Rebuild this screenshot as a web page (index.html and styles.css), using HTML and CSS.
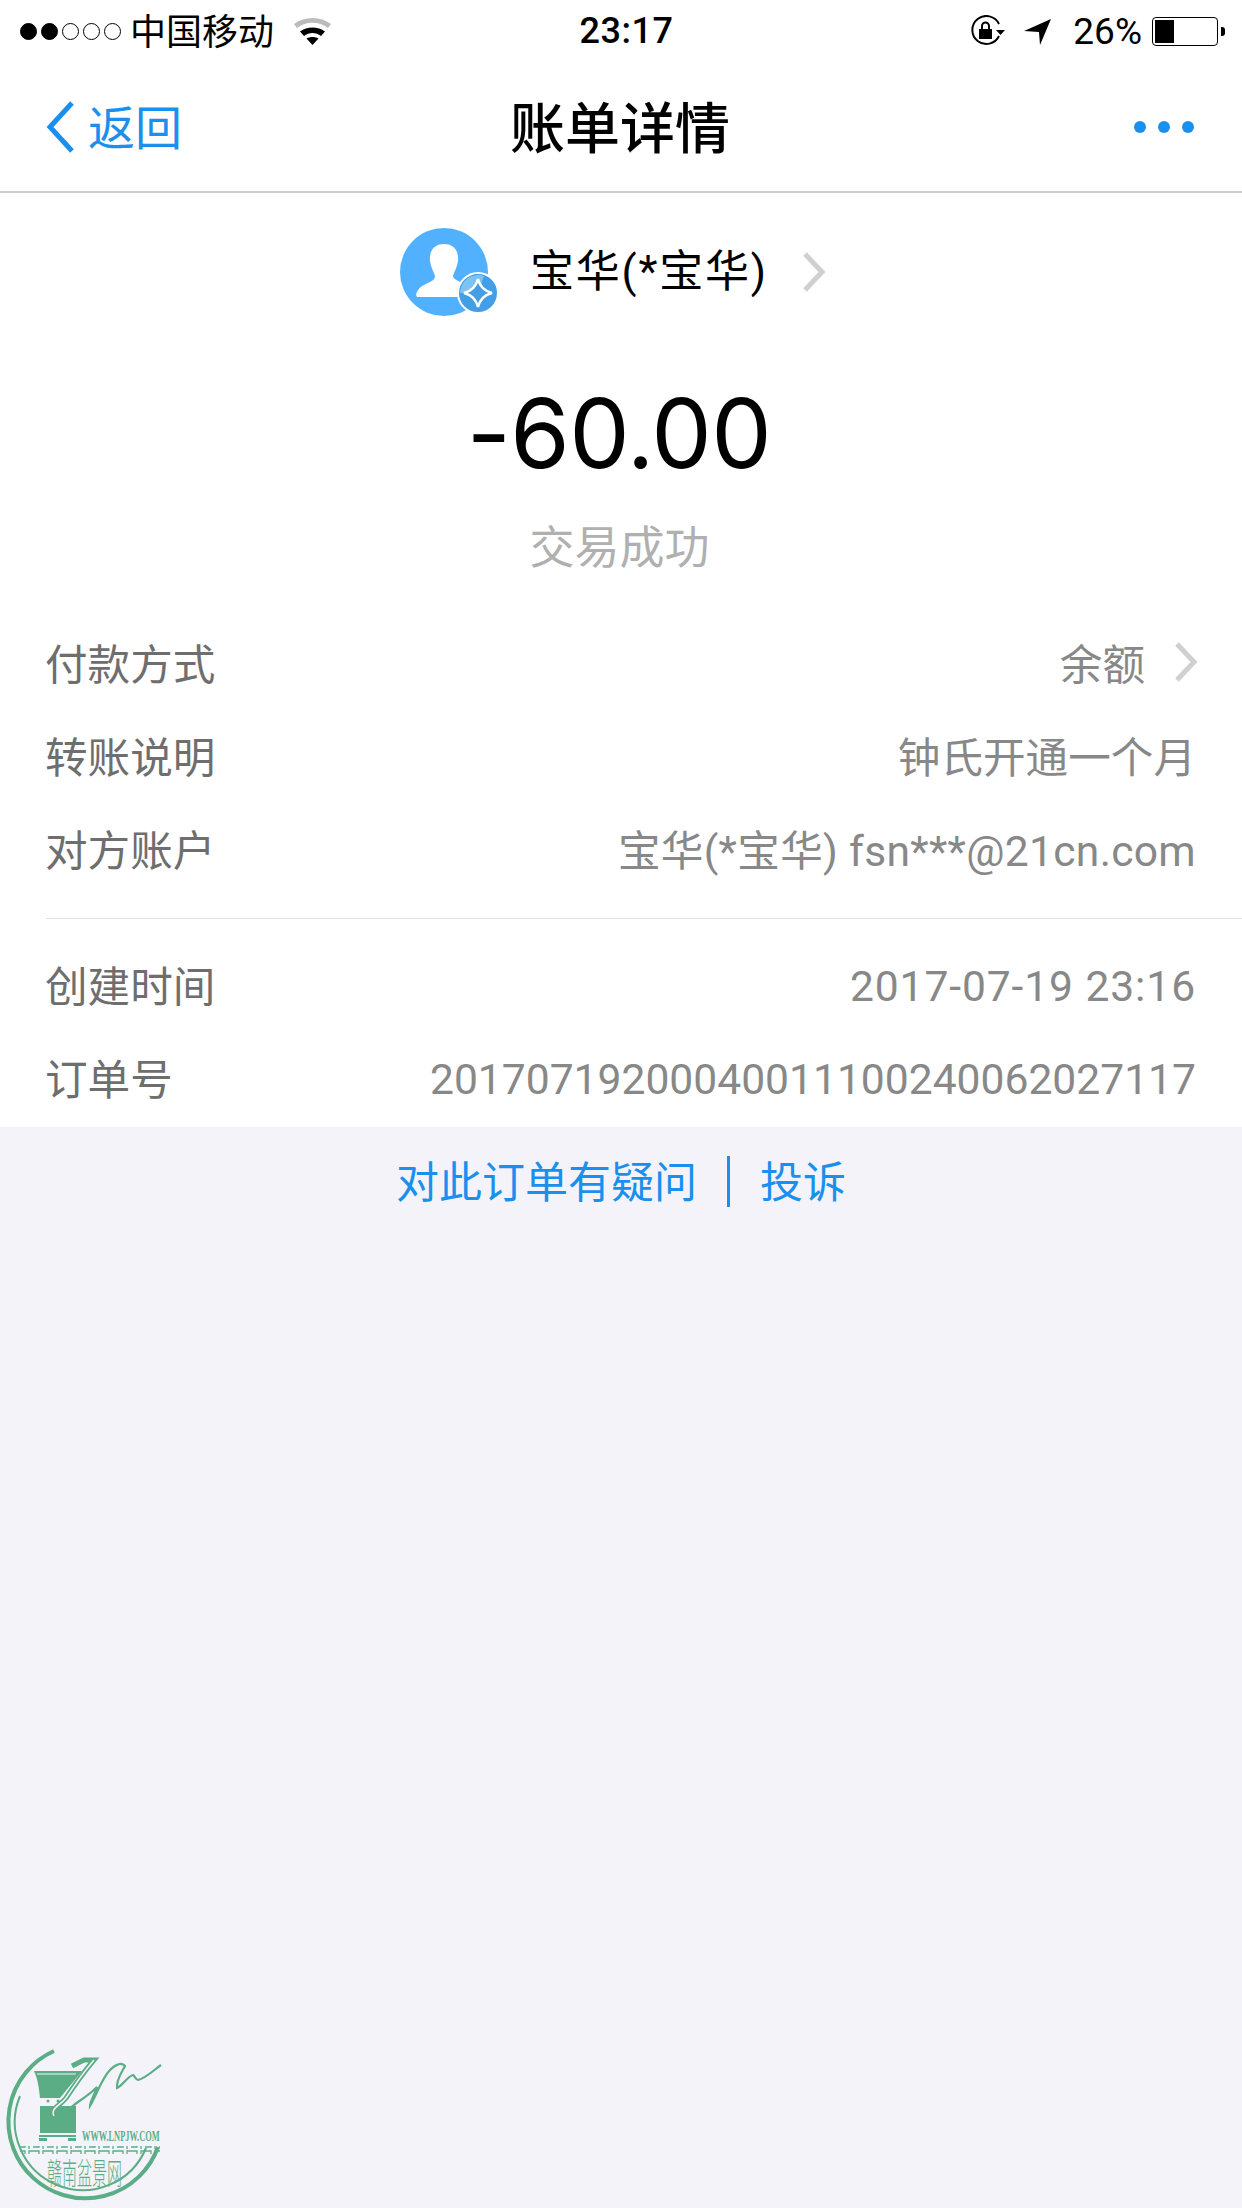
FILE: index.html
```html
<!DOCTYPE html>
<html lang="zh-CN">
<head>
  <meta charset="UTF-8">
  <title>账单详情</title>
  <link rel="stylesheet" href="styles.css">
</head>
<body>
  <div class="status-bar">
    <div class="status-left">
      <span class="signal"><i class="on"></i><i class="on"></i><i></i><i></i><i></i></span>
      <span class="carrier">中国移动</span>
      <svg class="wifi" width="37" height="27" viewBox="0 0 37 27">
        <path d="M0 6 C10 -2 27 -2 37 6 L34 10 C25 3 12 3 3 10 Z" fill="#bbb"/>
        <path d="M6 13.500 C13 8 24 8 31 13.500 L27 18 C22 14 15 14 10 18 Z" fill="#000"/>
        <path d="M12.500 20.500 C16 18.500 21 18.500 24.500 20.500 L18.500 27 Z" fill="#000"/>
      </svg>
    </div>
    <div class="status-time">23:17</div>
    <div class="status-right">
      <svg class="lock" width="34" height="32" viewBox="0 0 34 32">
        <path d="M28 21 A14 14 0 1 1 28 9" fill="none" stroke="#000" stroke-width="2"/>
        <path d="M25 15 H34 L29.500 20 Z" fill="#000"/>
        <rect x="8" y="14" width="13" height="10" fill="#000"/>
        <path d="M11 14 V11 A3.500 3.500 0 0 1 18 11 V14" fill="none" stroke="#000" stroke-width="2"/>
      </svg>
      <svg class="arrow" width="28" height="27" viewBox="0 0 28 27">
        <path d="M0 13 L27 1 L16 27 L15 14 Z" fill="#000"/>
      </svg>
      <span class="battery-text">26%</span>
      <span class="battery"><span class="battery-fill"></span></span>
      <span class="battery-tip"></span>
    </div>
  </div>

  <header class="nav">
    <a class="nav-back">
      <svg width="28" height="52" viewBox="0 0 28 52">
        <path d="M26 2 L4 26 L26 50" fill="none" stroke="#1a8fee" stroke-width="5"/>
      </svg>
      <span>返回</span>
    </a>
    <h1 class="nav-title">账单详情</h1>
    <span class="nav-more"><i></i><i></i><i></i></span>
  </header>

  <main class="bill">
    <div class="payee">
      <span class="avatar">
        <svg width="88" height="88" viewBox="0 0 88 88">
          <circle cx="44" cy="44" r="44" fill="#52b1ff"/>
          <path d="M44 16 C54 16 59 23 58 33 C57 40 54 44 53 48 C53 52 62 54 67 57 C72 60 74 64 74 69 H18 C14 69 17 60 24 57 C29 54 35 53 35 48 C34 44 31 40 30 33 C29 23 34 16 44 16 Z" fill="#fff"/>
        </svg>
        <svg class="avatar-badge" width="42" height="42" viewBox="0 0 42 42">
          <circle cx="21" cy="21" r="20" fill="#439ee6" stroke="#fff" stroke-width="2"/>
          <path d="M3 21 A18 18 0 0 1 27 4 L21 21 Z" fill="#7cc2f5"/>
          <path d="M21 7 C23 15 27 19 35 21 C27 23 23 27 21 35 C19 27 15 23 7 21 C15 19 19 15 21 7 Z" fill="#439ee6" stroke="#fff" stroke-width="2.500"/>
        </svg>
      </span>
      <span class="payee-name">宝华(*宝华)</span>
      <svg class="chevron" width="24" height="40" viewBox="0 0 24 40">
        <path d="M3 2 L20 20 L3 38" fill="none" stroke="#d0d0d0" stroke-width="5"/>
      </svg>
    </div>
    <div class="amount">-60.00</div>
    <div class="trade-state">交易成功</div>

    <div class="rows">
      <div class="row">
        <span class="row-label">付款方式</span>
        <span class="row-value">余额
          <svg class="chevron" width="24" height="40" viewBox="0 0 24 40">
            <path d="M3 2 L20 20 L3 38" fill="none" stroke="#d0d0d0" stroke-width="5"/>
          </svg>
        </span>
      </div>
      <div class="row">
        <span class="row-label">转账说明</span>
        <span class="row-value">钟氏开通一个月</span>
      </div>
      <div class="row">
        <span class="row-label">对方账户</span>
        <span class="row-value row-account">宝华(*宝华) fsn***@21cn.com</span>
      </div>
    </div>
    <div class="rows rows-second">
      <div class="row">
        <span class="row-label">创建时间</span>
        <span class="row-num row-date">2017-07-19 23:16</span>
      </div>
      <div class="row">
        <span class="row-label">订单号</span>
        <span class="row-num">20170719200040011100240062027117</span>
      </div>
    </div>
  </main>

  <div class="links">
    <a class="link-text">对此订单有疑问</a>
    <span class="link-bar"></span>
    <a class="link-text">投诉</a>
  </div>

  <svg class="watermark" width="200" height="178" viewBox="0 0 200 178">
    <defs>
      <pattern id="meander" width="14" height="8" patternUnits="userSpaceOnUse">
        <path d="M1 7 V1 H11 V5 H5" fill="none" stroke="#5bad85" stroke-width="1.300"/>
      </pattern>
    </defs>
    <!-- ring -->
    <path d="M54 21 A77 77 0 1 0 158 117" fill="none" stroke="#5bad85" stroke-width="4"/>
    <path d="M20 66 A68 68 0 0 0 146 118" fill="none" stroke="#5bad85" stroke-width="2"/>
    <!-- pot -->
    <path d="M34 41 H82 L60 68 H40 C39 58 38 50 34 41 Z" fill="#5bad85"/>
    <path d="M37 44 H76" fill="none" stroke="#f3f3f9" stroke-width="1"/>
    <rect x="40" y="76" width="36" height="27" fill="#5bad85"/>
    <rect x="39" y="105" width="37" height="2" fill="#5bad85"/>
    <rect x="39" y="108" width="8" height="3" fill="#5bad85"/>
    <rect x="68" y="108" width="8" height="3" fill="#5bad85"/>
    <circle cx="48" cy="71" r="1.500" fill="#5bad85"/>
    <circle cx="58" cy="71" r="1.500" fill="#5bad85"/>
    <!-- tree brush strokes -->
    <path d="M54 86 C50 78 60 76 66 68 C74 56 82 44 94 30 L84 30 L72 36" fill="none" stroke="#5bad85" stroke-width="5"/>
    <path d="M54 86 C50 78 60 76 66 68 C74 56 82 44 94 30" fill="none" stroke="#f3f3f9" stroke-width="1.500"/>
    <path d="M52 88 C62 86 70 78 78 72 C84 68 92 62 97 57 C94 66 90 72 90 76 C96 66 102 48 110 40 C116 34 122 32 125 36 C122 42 116 50 117 58 C122 56 128 46 133 45 C135 46 136 50 138 50 C146 48 154 40 161 35" fill="none" stroke="#5bad85" stroke-width="2.200"/>
    <g transform="translate(82 111) scale(0.56 1)">
      <text class="watermark-url">WWW.LNPJW.COM</text>
    </g>
    <rect x="20" y="116" width="140" height="8" fill="url(#meander)"/>
    <g transform="translate(47 154) scale(0.5 1)">
      <text class="watermark-name">赣南盆景网</text>
    </g>
  </svg>
</body>
</html>
```

FILE: styles.css
```css
* {
  box-sizing: border-box;
}
html, body {
  margin: 0;
  padding: 0;
}
body {
  width: 1242px;
  height: 2208px;
  position: relative;
  overflow: hidden;
  background-color: #f3f3f9;
  font-family: Roboto, "Noto Sans CJK SC", sans-serif;
  color: #000;
}

/* status bar */
.status-bar {
  height: 62px;
  padding: 0 17px 0 20px;
  background-color: #fff;
  display: grid;
  grid-template-columns: 1fr auto 1fr;
  align-items: center;
}
.status-left, .status-right {
  display: flex;
  align-items: center;
}
.status-right {
  justify-content: flex-end;
}
.signal {
  display: flex;
  gap: 4px;
}
.signal i {
  width: 17px;
  height: 17px;
  border: 1.5px solid #000;
  border-radius: 50%;
}
.signal i.on {
  background-color: #000;
}
.carrier {
  margin-left: 9px;
  margin-bottom: 5px;
  font-size: 36px;
}
.wifi {
  margin-left: 20px;
}
.status-time {
  font-size: 36px;
  font-weight: 500;
  letter-spacing: 0.5px;
  margin-left: 8px;
}
.arrow {
  margin-left: 19px;
}
.battery-text {
  margin-left: 21px;
  font-size: 37px;
}
.battery {
  margin-left: 10px;
  width: 66px;
  height: 29px;
  padding: 2px;
  border: 1px solid #000;
  border-radius: 4px;
}
.battery-fill {
  display: block;
  width: 19px;
  height: 100%;
  background-color: #000;
}
.battery-tip {
  width: 4px;
  height: 9px;
  margin-left: 3px;
  background-color: #000;
  border-radius: 0 3px 3px 0;
}

/* nav */
.nav {
  height: 131px;
  padding: 0 48px 0 46px;
  background-color: #fff;
  border-bottom: 2px solid #ccc;
  display: grid;
  grid-template-columns: 1fr auto 1fr;
  align-items: center;
}
.nav-back {
  display: flex;
  align-items: center;
  color: #1a8fee;
  font-size: 47px;
}
.nav-back span {
  margin-left: 14px;
  margin-bottom: 5px;
}
.nav-title {
  margin: 0 0 6px;
  font-size: 55px;
  font-weight: 500;
}
.nav-more {
  display: flex;
  justify-content: flex-end;
  gap: 12px;
}
.nav-more i {
  width: 12px;
  height: 12px;
  border-radius: 50%;
  background-color: #1a8fee;
}

/* bill */
.bill {
  height: 934px;
  background-color: #fff;
  padding-top: 35px;
}
.payee {
  display: flex;
  align-items: center;
  margin-left: 400px;
}
.avatar {
  position: relative;
  width: 88px;
  height: 88px;
}
.avatar svg {
  display: block;
}
.avatar .avatar-badge {
  position: absolute;
  right: -11px;
  bottom: 2px;
}
.payee-name {
  margin-left: 42px;
  margin-bottom: 9px;
  font-size: 44px;
  letter-spacing: 1.8px;
}
.payee .chevron {
  margin-left: 34px;
}
.amount {
  margin-top: 57px;
  text-align: center;
  font-family: Inter, sans-serif;
  font-size: 96px;
  line-height: 120px;
  letter-spacing: -0.6px;
  word-spacing: 0;
  margin-right: 4px;
}
.trade-state {
  margin-top: 26px;
  margin-right: 3px;
  text-align: center;
  font-size: 45px;
  line-height: 60px;
  color: #b0b0b0;
}
.rows {
  margin-top: 38px;
  margin-left: 46px;
  padding-right: 46px;
}
.rows-second {
  margin-top: 22px;
  padding-top: 20px;
  border-top: 1px solid #e0e0e0;
}
.row {
  height: 93px;
  display: flex;
  justify-content: space-between;
  align-items: center;
  font-size: 42.6px;
  color: #888;
}
.row-label {
  margin-left: -1px;
  margin-bottom: 4px;
  color: #6e6e6e;
}
.row-value {
  display: flex;
  align-items: center;
  margin-bottom: 4px;
}
.row-account {
  letter-spacing: 0.3px;
}
.row-date {
  letter-spacing: 0.9px;
}
.row-value .chevron {
  margin-left: 29px;
  margin-right: -2px;
}

/* links */
.links {
  height: 110px;
  padding-bottom: 2px;
  display: flex;
  justify-content: center;
  align-items: center;
  gap: 30px;
  font-size: 43px;
  color: #1a8fee;
}
.link-text {
  margin-bottom: 5px;
}
.link-bar {
  width: 3px;
  height: 51px;
  background-color: #1a8fee;
}

.watermark {
  position: absolute;
  left: 0;
  top: 2030px;
}
.watermark-url {
  font-family: "Liberation Serif", serif;
  font-size: 15px;
  font-weight: bold;
  fill: #5bad85;
}
.watermark-name {
  font-family: "Noto Sans CJK SC", sans-serif;
  font-size: 30px;
  font-weight: 300;
  fill: #5bad85;
}
```
